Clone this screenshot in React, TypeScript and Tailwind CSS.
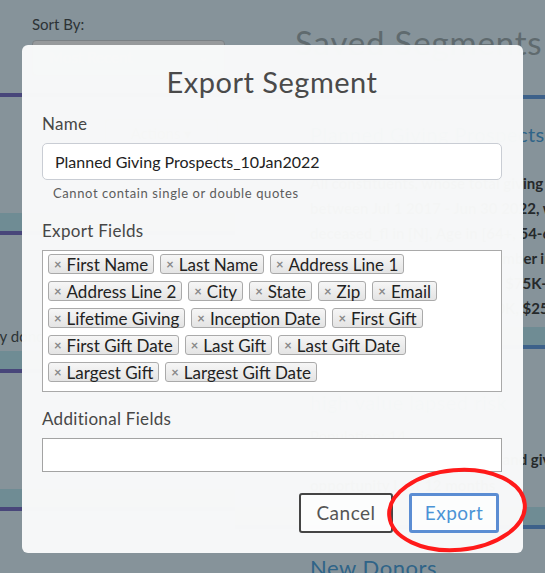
const fields = [
  'First Name',
  'Last Name',
  'Address Line 1',
  'Address Line 2',
  'City',
  'State',
  'Zip',
  'Email',
  'Lifetime Giving',
  'Inception Date',
  'First Gift',
  'First Gift Date',
  'Last Gift',
  'Last Gift Date',
  'Largest Gift',
  'Largest Gift Date',
]

function Tag({ label }: { label: string }) {
  return (
    <span className="flex h-[20px] items-center gap-[5px] rounded-[3px] border border-[#aaaaaa] bg-gradient-to-b from-[#f6f6f6] to-[#e4e4e4] pl-[5px] pr-[5px] text-[17px] leading-none text-[#222]">
      <span className="text-[13px] font-bold text-[#888]">×</span>
      {label}
    </span>
  )
}

function LeftCard({ children }: { children?: React.ReactNode }) {
  return (
    <div className="border-t-4 border-[#48467a]">
      <div className="h-[116px] px-8 pt-[22px] text-[15px] text-[#2d3336]">{children}</div>
      <div className="h-[18px] bg-[#6f8c94]" />
    </div>
  )
}

export default function App() {
  return (
    <div className="relative h-[573px] w-[545px] overflow-hidden bg-[#86939a] font-['Lato',sans-serif]">
      {/* Page behind the dialog (already dimmed) */}
      <div className="flex h-full">
        <div className="w-[235px] shrink-0">
          <div className="h-[93px] px-8 pt-[13px]">
            <p className="text-[15px] text-[#2c3235]">Sort By:</p>
            <div className="mt-[4px] flex h-[36px] w-[193px] items-center justify-between rounded border border-[#7b8185] bg-[#979a9c] px-4 text-[15px] text-[#b4b6b8]">
              Most Recent <span className="text-[11px]">⌄</span>
            </div>
          </div>
          <LeftCard>
            <div className="ml-[73px] flex h-[28px] w-[113px] items-center justify-center rounded border border-[#7b8185] text-[#555]">
              Actions ▾
            </div>
          </LeftCard>
          <LeftCard>
            <p className="-ml-[36px] mt-[68px] whitespace-nowrap">ly donors</p>
          </LeftCard>
          <LeftCard />
          <div className="border-t-4 border-[#48467a]" />
        </div>

        <div className="flex-1 pt-[22px]">
          <h2 className="pl-[60px] text-[33px] leading-[40px] tracking-wide text-[#5f6a6e]">Saved Segments</h2>
          <div className="mt-[33px] border-t-4 border-[#3d618a]">
            <div className="h-[228px] pl-[75px] pt-[20px]">
              <p className="whitespace-nowrap text-[20px] tracking-wide text-[#2f6488]">Planned Giving Prospects</p>
              <div className="mt-[25px] space-y-[7px] whitespace-nowrap text-[15px] font-bold leading-[18px] text-[#25292b]">
                <p>All constituents, whose total giving</p>
                <p>between Jul 1 2017 - Jun 30 2022, was</p>
                <p>deceased_fl in [N], Age in [64+, 54-63],</p>
                <p>Donor Graduate Degree1 Number in [1],</p>
                <p className="pl-[110px]">$50K-$75K, $75K-$100K,</p>
                <p className="pl-[110px]">$100K-$250K, $250K+</p>
              </div>
            </div>
            <div className="h-[18px] bg-[#6f8c94]" />
          </div>
          <div className="border-t-4 border-[#3d618a]">
            <div className="h-[158px] pl-[75px] pt-[38px]">
              <p className="whitespace-nowrap text-[20px] tracking-wide text-[#2f6488]">high value lapsed risk</p>
              <p className="mt-[8px] text-[15px] text-[#25292b]">Population: 14</p>
              <div className="space-y-[4px] whitespace-nowrap text-[15px] font-bold text-[#25292b]">
                <p>Donors with high lapsed risk and giving</p>
                <p>opportunity Last 12 months</p>
              </div>
            </div>
            <div className="h-[18px] bg-[#6f8c94]" />
          </div>
          <div className="border-t-4 border-[#3d618a] pl-[75px] pt-[22px]">
            <p className="text-[22px] tracking-wide text-[#2f6488]">New Donors</p>
          </div>
        </div>
      </div>

      {/* Export dialog */}
      <div className="absolute left-[22px] top-[45px] flex h-[508px] w-[501px] flex-col rounded-[6px] bg-[#f8f9f9]/[0.985] pl-[20px] pr-[21px] pt-[19px] text-[#474747]">
        <h1 className="text-center text-[29px] leading-[36px] tracking-[0.5px] text-[#4a4a4a]">Export Segment</h1>

        <label className="mt-[12px] text-[17px] leading-[24px] tracking-[0.3px]">Name</label>
        <input
          readOnly
          value="Planned Giving Prospects_10Jan2022"
          className="mt-[7px] h-[37px] rounded-[5px] border border-[#c9cdd4] bg-white px-[12px] text-[16px] text-[#222] outline-none"
        />
        <p className="mt-[4px] pl-[11px] text-[13px] leading-[18px] tracking-[0.6px] text-[#5c5c5c]">
          Cannot contain single or double quotes
        </p>

        <label className="mt-[17px] text-[17px] leading-[24px] tracking-[0.3px]">Export Fields</label>
        <div className="mt-[7px] flex h-[142px] flex-wrap content-start gap-x-[6px] gap-y-[7px] border border-[#a9a9a9] bg-white px-[5px] pt-[3px]">
          {fields.map((f) => (
            <Tag key={f} label={f} />
          ))}
        </div>

        <label className="mt-[15px] text-[17px] leading-[24px] tracking-[0.3px]">Additional Fields</label>
        <div className="mt-[7px] h-[34px] border border-[#a3a3a3] bg-white" />

        <div className="mr-[3px] mt-[21px] flex justify-end gap-[16px]">
          <button className="h-[40px] w-[94px] rounded-[3px] border-2 border-[#454545] bg-white/70 text-[19px] tracking-[0.5px] text-[#555]">
            Cancel
          </button>
          <button className="h-[40px] w-[90px] rounded-[3px] border-[3px] border-[#5b8dd3] bg-white/70 text-[19px] tracking-[0.5px] text-[#4b93d6]">
            Export
          </button>
        </div>
      </div>

      {/* Annotation circle */}
      <svg className="absolute left-[385px] top-[465px]" width="144" height="90" viewBox="0 0 144 90">
        <ellipse cx="72" cy="45" rx="68" ry="40" fill="none" stroke="#ff1a1a" strokeWidth="4" transform="rotate(-5 72 45)" />
      </svg>
    </div>
  )
}
